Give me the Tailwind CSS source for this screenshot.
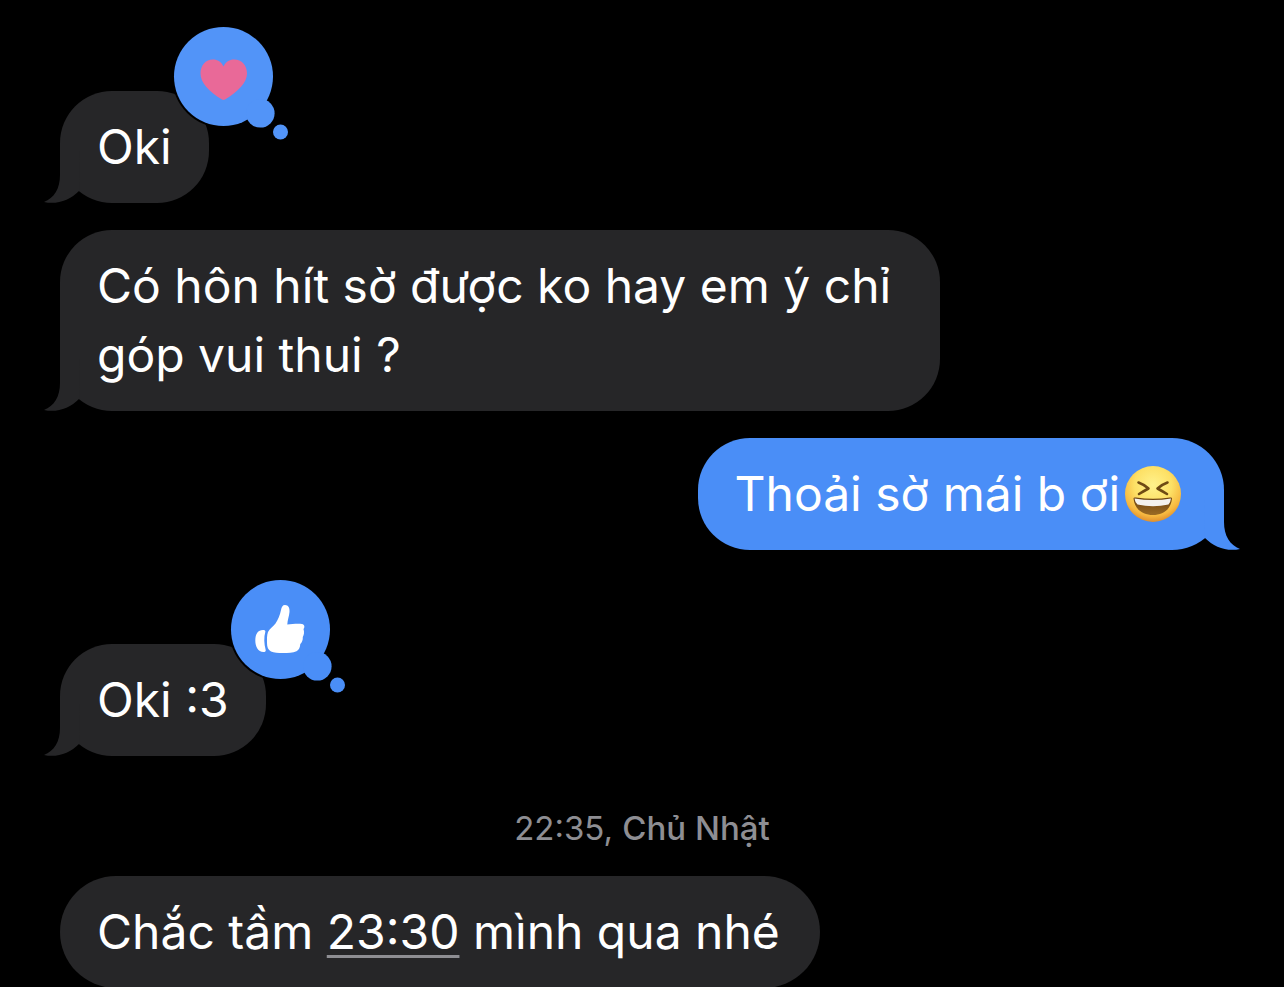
<!DOCTYPE html>
<html lang="vi">
<head>
  <meta charset="UTF-8" />
  <meta name="viewport" content="width=device-width, initial-scale=1.0" />
  <title>Tin nhắn</title>
  <!-- Tailwind CSS -->
  <script src="https://cdn.jsdelivr.net/npm/@tailwindcss/browser@4"></script>
</head>
<body class="bg-black font-['Inter','Noto_Sans',sans-serif] text-[48px] leading-[69px] text-white">

  <!-- Shared shapes -->
  <svg class="hidden" aria-hidden="true">
    <symbol id="tail" viewBox="0 0 36 52">
      <path d="M16 0V24C16 38 10 47 0 51C13 54 26 49 35 40L36 0Z" fill="currentColor" />
    </symbol>
    <symbol id="thought" viewBox="0 0 120 120">
      <circle cx="52.500" cy="52.500" r="51.500" fill="#000" />
      <circle cx="52.500" cy="52.500" r="49.500" fill="currentColor" />
      <circle cx="89.300" cy="89.300" r="14.300" fill="currentColor" />
      <circle cx="109.500" cy="108" r="7.500" fill="currentColor" />
    </symbol>
  </svg>

  <main class="flex min-h-screen flex-col px-[60px] pt-[91px]">

    <!-- Oki + heart -->
    <div class="relative w-fit rounded-[52px] bg-[#262628] px-[37px] pt-[21px] pb-[22px]">
      <p>Oki</p>
      <svg class="absolute bottom-0 -left-4 h-[52px] w-9 text-[#262628]" aria-hidden="true"><use href="#tail" /></svg>
      <div class="absolute -top-[67px] left-full -ml-[38px] size-[120px] text-[#5294f8]">
        <svg class="size-full" viewBox="0 0 120 120" role="img" aria-label="Yêu thích">
          <use href="#thought" />
          <path d="M52.500 42.500C54.500 38 58.500 35.500 63 35.500C71 35.500 76 41.500 76 49.500C76 58.500 67.500 67 54 75.600Q52.500 76.500 51 75.600C37.500 67 29.500 58.500 29.500 49.500C29.500 41.500 34.500 35.500 42 35.500C46.500 35.500 50.500 38 52.500 42.500Z" fill="#e96998" />
        </svg>
      </div>
    </div>

    <div class="relative mt-[27px] w-full max-w-[880px] rounded-[52px] bg-[#262628] px-[37px] pt-[21px] pb-[22px]">
      <p>Có hôn hít sờ được ko hay em ý chỉ góp vui thui ?</p>
      <svg class="absolute bottom-0 -left-4 h-[52px] w-9 text-[#262628]" aria-hidden="true"><use href="#tail" /></svg>
    </div>

    <!-- Outgoing -->
    <div class="relative mt-[27px] flex w-fit items-center self-end rounded-[52px] bg-[#4a8ef7] pt-[21px] pr-[42px] pb-[22px] pl-[37px]">
      <p>Thoải sờ mái b ơi</p>
      <svg class="ml-1 size-[58px]" viewBox="0 0 58 58" role="img" aria-label="Cười">
        <defs>
          <radialGradient id="face" cx="50%" cy="34%" r="67%">
            <stop offset="0" stop-color="#fff28c" />
            <stop offset=".5" stop-color="#fde065" />
            <stop offset=".82" stop-color="#f6b840" />
            <stop offset="1" stop-color="#dd8a2c" />
          </radialGradient>
          <linearGradient id="mouth" x1="0" y1="0" x2="0" y2="1">
            <stop offset="0" stop-color="#6b4210" />
            <stop offset="1" stop-color="#9a6a24" />
          </linearGradient>
        </defs>
        <circle cx="29" cy="29" r="28" fill="url(#face)" />
        <path d="M14.500 17.500Q20 19.500 24.500 23.500Q20 26 15 29" fill="none" stroke="#6e4a14" stroke-width="2.600" stroke-linecap="round" stroke-linejoin="round" />
        <path d="M43.500 17.500Q38 19.500 33.500 23.500Q38 26 43 29" fill="none" stroke="#6e4a14" stroke-width="2.600" stroke-linecap="round" stroke-linejoin="round" />
        <path d="M9.500 33.500Q9.500 32 12 32.500Q29 35 46 32.500Q48 32 48 33.500C47 44.500 39 50 29 50S10.500 44.500 9.500 33.500Z" fill="url(#mouth)" />
        <path d="M10.500 33.500Q29 36.500 47 33.500Q46.500 37.500 44.500 39.500Q29 43 13.500 39.500Q11 37.500 10.500 33.500Z" fill="#f4f2ee" />
      </svg>
      <svg class="absolute -right-4 bottom-0 h-[52px] w-9 -scale-x-100 text-[#4a8ef7]" aria-hidden="true"><use href="#tail" /></svg>
    </div>

    <!-- Oki :3 + thumbs up -->
    <div class="relative mt-[94px] w-fit rounded-[52px] bg-[#262628] px-[37px] pt-[21px] pb-[22px]">
      <p>Oki :3</p>
      <svg class="absolute bottom-0 -left-4 h-[52px] w-9 text-[#262628]" aria-hidden="true"><use href="#tail" /></svg>
      <div class="absolute -top-[67px] left-full -ml-[38px] size-[120px] text-[#4a8ef7]">
        <svg class="size-full" viewBox="0 0 120 120" role="img" aria-label="Thích">
          <use href="#thought" />
          <g fill="#fff">
            <path d="M57 28C60.500 28 61.800 31 61.500 35C61.200 39 59.500 43 59.300 47.500C64 47 70 46.500 74 47C76.500 47.500 77 50 75.500 52C76.500 55 76 58 74.800 60C75 63 74 65.500 72.300 67C72 70.500 71 73 68.500 74.200C65 76 60 76 55 76C50 76 46 75.800 43 74.500C40 73 39 70 39 66C39 62 38.800 58 40 55C41.500 51.500 45 50 47.500 46.500C50 42.500 52 38 53 33C53.600 30 54.500 28 57 28Z" />
            <path d="M35 53C36.500 53 37.800 53.500 37.300 55C35.800 60 36 67 37.700 73C38 74.500 37 75 35.500 75C30 75 27.300 69.500 27.300 63.500C27.300 57 30 53 35 53Z" />
          </g>
        </svg>
      </div>
    </div>

    <!-- Timestamp -->
    <p class="mt-[51px] text-center text-[33px] leading-[42px] text-[#8e8e93]"><time>22:35, <span class="font-medium">Chủ Nhật</span></time></p>

    <div class="mt-[27px] w-fit rounded-[56px] bg-[#262628] pt-[21px] pr-10 pb-[22px] pl-[37px]">
      <p>Chắc tầm <a href="#" class="underline decoration-[#8e8e93] decoration-[3px] underline-offset-[6px]">23:30</a> mình qua nhé</p>
    </div>
  </main>

</body>
</html>
